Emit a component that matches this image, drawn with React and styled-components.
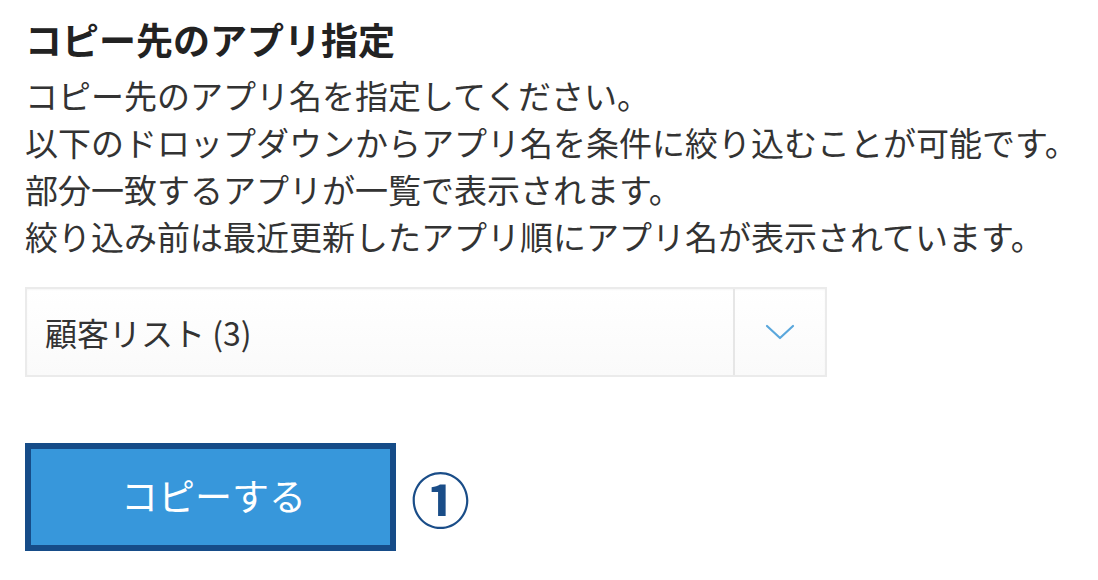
import React from "react";
import styled, { createGlobalStyle } from "styled-components";

const GlobalStyle = createGlobalStyle`
  body {
    margin: 0;
    background: #ffffff;
    font-family: "Noto Sans CJK JP", "Noto Sans", sans-serif;
  }
`;

const Page = styled.div`
  padding: 13px 0 0 25px;
  color: #333333;
`;

const Title = styled.h2`
  margin: 0 0 7px;
  font-size: 37px;
  line-height: 52px;
  font-weight: 700;
  color: #222222;
`;

const Description = styled.div`
  font-size: 33px;
  line-height: 47px;
  color: #333333;
`;

const Select = styled.div`
  margin-top: 27px;
  width: 802px;
  height: 90px;
  box-sizing: border-box;
  display: flex;
  border: 2px solid #ebebeb;
  background: linear-gradient(#ffffff, #fafafa);
  box-shadow: inset 0 1px 2px rgba(0, 0, 0, 0.04);
`;

const SelectValue = styled.div`
  flex: 1;
  display: flex;
  align-items: center;
  padding-left: 18px;
  font-size: 32px;
  color: #333333;
`;

const SelectToggle = styled.div`
  width: 90px;
  display: flex;
  align-items: center;
  justify-content: center;
  border-left: 2px solid #e6e6e6;
`;

const ActionRow = styled.div`
  margin-top: 66px;
  display: flex;
  align-items: center;
  gap: 15px;
`;

const CopyButton = styled.button`
  width: 371px;
  height: 108px;
  box-sizing: border-box;
  border: 6px solid #164c88;
  background: #3797db;
  color: #ffffff;
  font-family: inherit;
  font-size: 37px;
  padding: 0 0 4px 6px;
  cursor: pointer;
`;

const StepMark = styled.span`
  font-size: 59px;
  line-height: 1;
  font-weight: 700;
  color: #1a4d88;
`;

const Chevron = () => (
  <svg width="30" height="18" viewBox="0 0 30 18">
    <polyline
      points="2,3 15,15 28,3"
      fill="none"
      stroke="#5aa7dc"
      strokeWidth="2.2"
      strokeLinecap="round"
      strokeLinejoin="round"
    />
  </svg>
);

const lines = [
  "コピー先のアプリ名を指定してください。",
  "以下のドロップダウンからアプリ名を条件に絞り込むことが可能です。",
  "部分一致するアプリが一覧で表示されます。",
  "絞り込み前は最近更新したアプリ順にアプリ名が表示されています。",
];

const App = () => {
  return (
    <Page>
      <GlobalStyle />
      <Title>コピー先のアプリ指定</Title>
      <Description>
        {lines.map((line) => (
          <div key={line}>{line}</div>
        ))}
      </Description>
      <Select>
        <SelectValue>顧客リスト (3)</SelectValue>
        <SelectToggle>
          <Chevron />
        </SelectToggle>
      </Select>
      <ActionRow>
        <CopyButton>コピーする</CopyButton>
        <StepMark>①</StepMark>
      </ActionRow>
    </Page>
  );
};

export default App;
